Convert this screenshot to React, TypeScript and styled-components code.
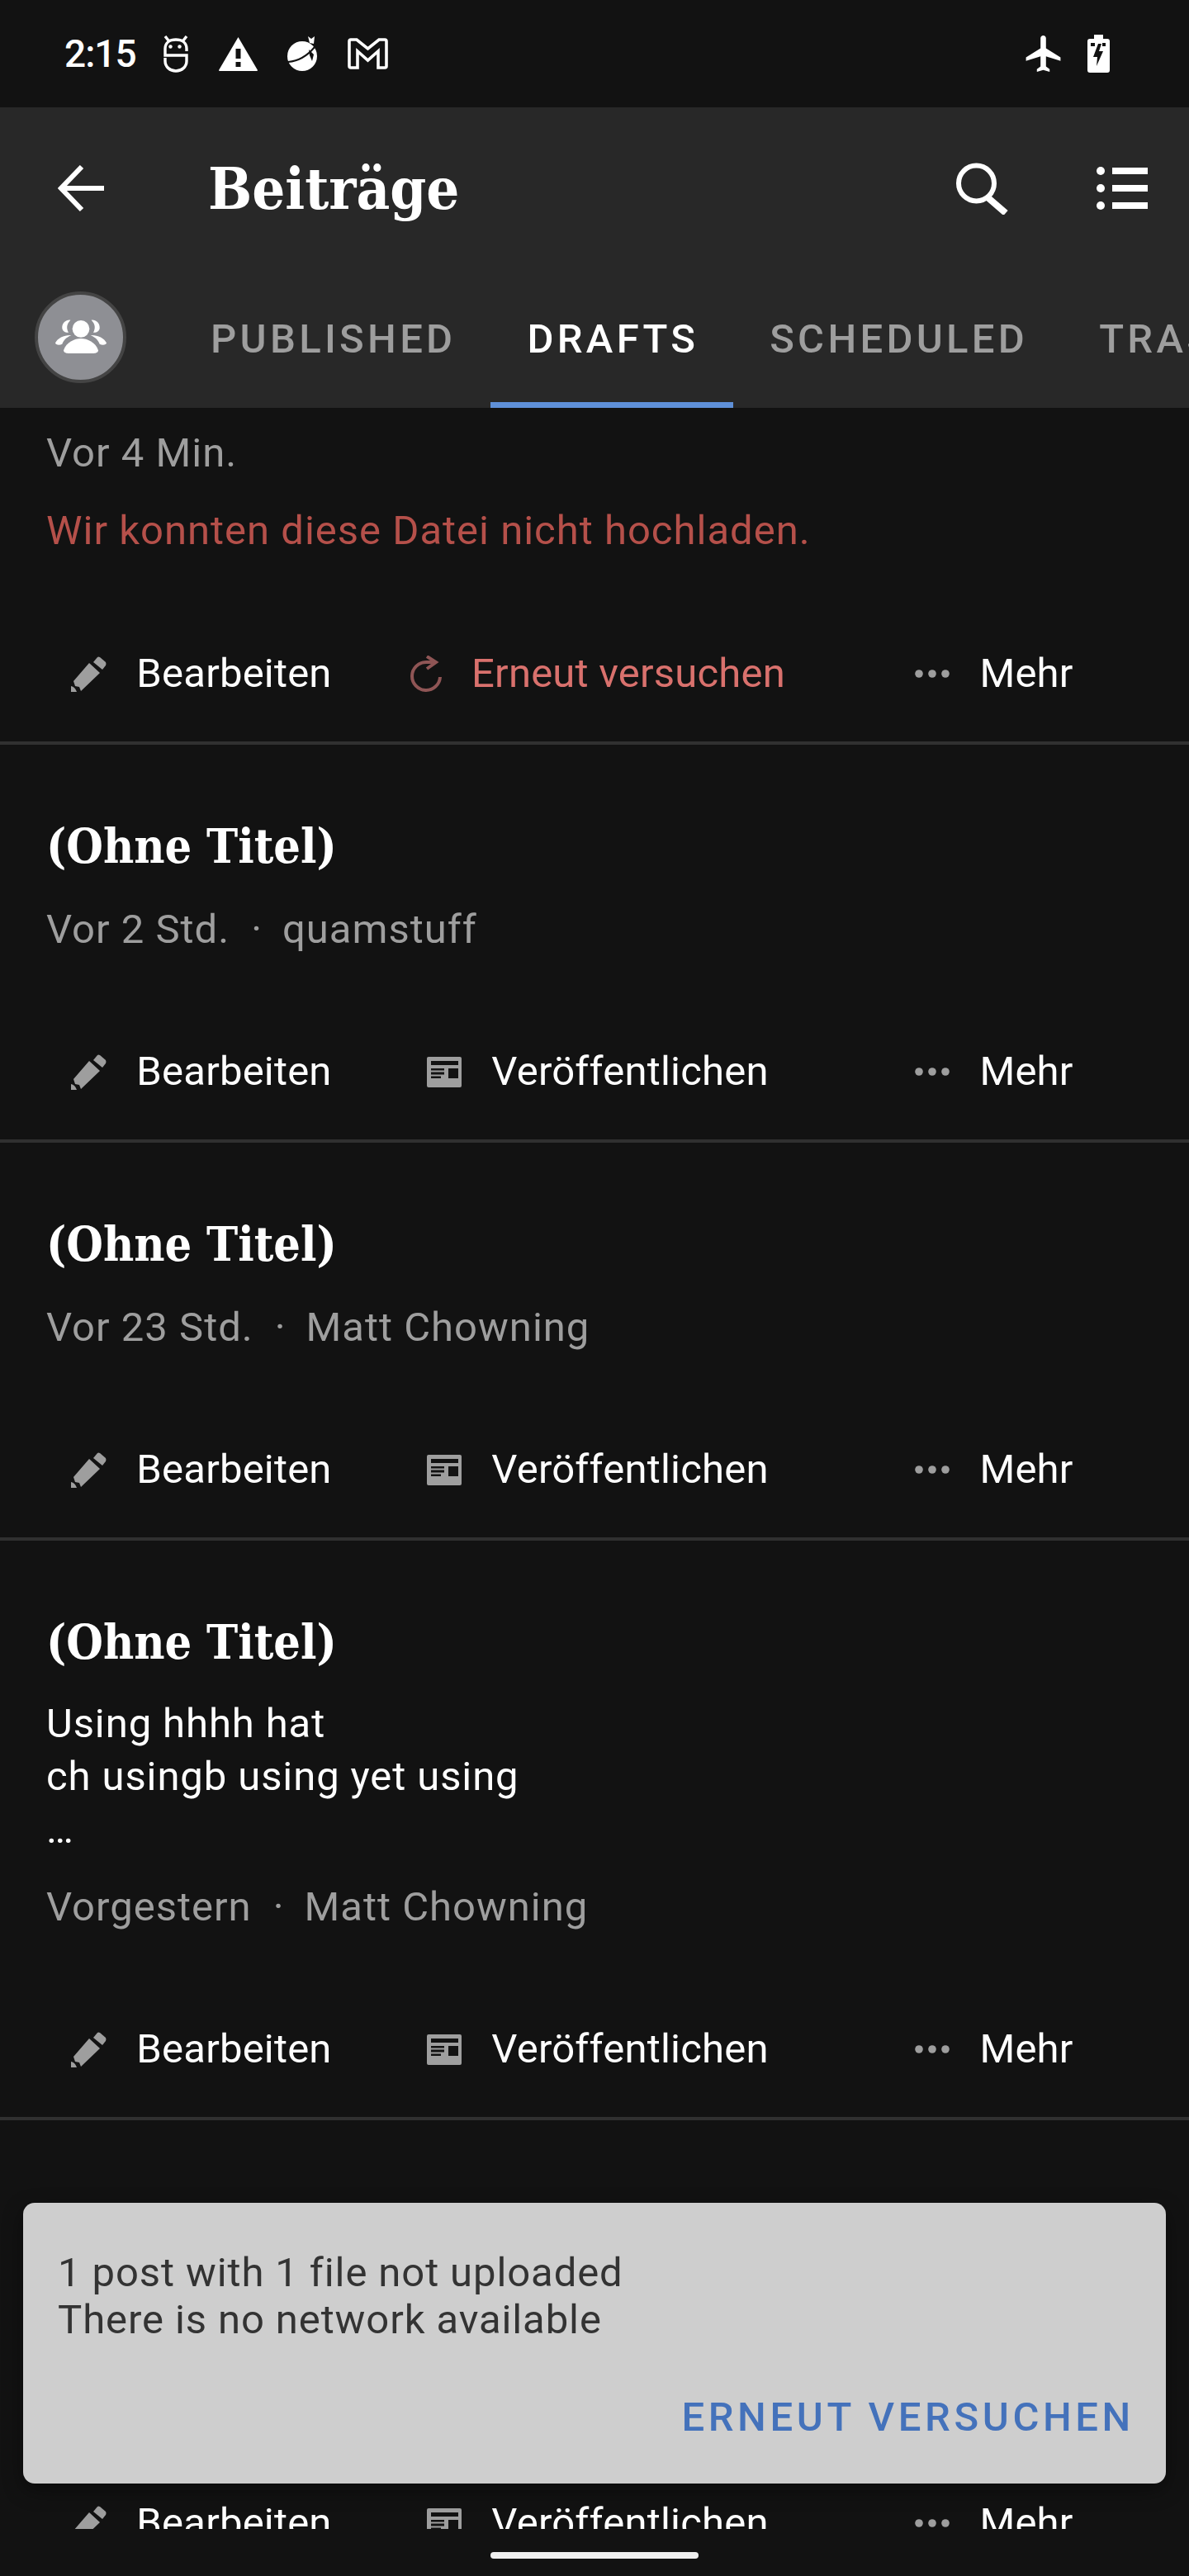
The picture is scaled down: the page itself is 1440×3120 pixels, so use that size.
import styled, { createGlobalStyle } from 'styled-components';

const GRAY = '#9e9e9e';
const BG = '#121212';

const GlobalStyle = createGlobalStyle`
  html, body {
    margin: 0;
    padding: 0;
    background: ${BG};
  }
  * {
    box-sizing: border-box;
  }
`;

const Screen = styled.div`
  position: relative;
  display: flex;
  flex-direction: column;
  width: 1440px;
  height: 3120px;
  overflow: hidden;
  background: ${BG};
  color: #fff;
  font-family: Roboto, "Liberation Sans", sans-serif;
  font-size: 49px;
  line-height: 64px;
`;

/* status bar */
const StatusBar = styled.div`
  display: flex;
  align-items: center;
  flex: none;
  height: 130px;
  padding: 0 96px 0 78px;
`;

const Clock = styled.span`
  width: 119px;
  font-size: 46px;
  letter-spacing: -1px;
  font-weight: 500;
`;

const StatusIcons = styled.div`
  display: flex;
  align-items: center;
  gap: ${(p: { $gap: number }) => p.$gap}px;
`;

const Spacer = styled.div`
  flex: 1;
`;

/* app bar */
const AppBar = styled.header`
  flex: none;
  background: #282828;
`;

const TopRow = styled.div`
  display: flex;
  align-items: center;
  height: 192px;
  padding: 4px 50px 0 70px;
`;

const PageTitle = styled.h1`
  margin: 0 0 0 126px;
  padding-top: 2px;
  flex: 1;
  font-family: "DejaVu Serif", "Liberation Serif", serif;
  font-stretch: condensed;
  font-weight: 700;
  font-size: 70px;
  line-height: 80px;
`;

const TopActions = styled.div`
  display: flex;
  align-items: center;
  gap: 106px;
`;

const TabRow = styled.div`
  display: flex;
  align-items: center;
  height: 172px;
  padding-left: 42px;
  overflow: hidden;
`;

const Avatar = styled.div`
  display: flex;
  align-items: center;
  justify-content: center;
  flex: none;
  width: 111px;
  height: 111px;
  margin-right: 58px;
  border: 4px solid #444;
  border-radius: 50%;
  background: #8e8f94;
`;

const Tab = styled.div<{ $active?: boolean }>`
  display: flex;
  align-items: center;
  flex: none;
  height: 172px;
  padding: 12px 42px 0 44px;
  border-bottom: 7px solid ${(p) => (p.$active ? '#5f90d8' : 'transparent')};
  color: ${(p) => (p.$active ? '#fff' : GRAY)};
  font-weight: 500;
  letter-spacing: 4.3px;
`;

/* list */
const List = styled.main`
  flex: none;
  height: 2569px;
  overflow: hidden;
`;

const Post = styled.article`
  padding: 0 56px;
  border-bottom: 4px solid #303030;
  &:last-child {
    border-bottom: 0;
  }
`;

const ClippedPost = styled(Post)`
  padding-top: 23px;
`;

/* only its action row shows, the rest of this post is behind the snackbar */
const CoveredPost = styled(Post)`
  padding-top: 348px;
`;

const PostTitle = styled.h2`
  margin: 0;
  padding-top: 88px;
  font-family: "DejaVu Serif", "Liberation Serif", serif;
  font-stretch: condensed;
  font-weight: 700;
  font-size: 57px;
  line-height: 70px;
`;

const Excerpt = styled.p`
  margin: 32px 0 0;
  white-space: pre-line;
  letter-spacing: 0.9px;
`;

const Meta = styled.div<{ $spaced?: boolean }>`
  display: flex;
  margin-top: ${(p) => (p.$spaced ? 30 : 34)}px;
  color: ${GRAY};
  letter-spacing: 1px;
`;

const ClippedMeta = styled(Meta)`
  margin-top: 0;
`;

const MetaDot = styled.span`
  padding: 0 24px 0 26px;
`;

const ErrorText = styled.div`
  margin-top: 30px;
  padding-bottom: 1px;
  color: #b5504a;
  letter-spacing: 1px;
`;

const Actions = styled.div`
  display: grid;
  grid-template-columns: repeat(3, 1fr);
  margin: 108px -60px 0 -52px;
  padding-bottom: 50px;
  letter-spacing: 0.2px;
`;

const ActionButton = styled.div<{ $danger?: boolean }>`
  display: flex;
  align-items: center;
  justify-content: center;
  gap: 36px;
  height: 64px;
  color: ${(p) => (p.$danger ? '#d9716d' : '#fff')};
`;

/* snackbar */
const Snackbar = styled.aside`
  position: absolute;
  left: 28px;
  top: 2668px;
  width: 1384px;
  height: 340px;
  padding: 56px 38px 0 42px;
  border-radius: 14px;
  background: #cecece;
  color: #333;
  box-shadow: 0 8px 24px rgba(0, 0, 0, 0.4);
`;

const SnackText = styled.div`
  line-height: 57px;
  letter-spacing: 0.9px;
`;

const SnackAction = styled.div`
  margin-top: 58px;
  text-align: right;
  color: #4472bb;
  font-weight: 500;
  letter-spacing: 4.6px;
`;

/* gesture pill */
const NavArea = styled.div`
  display: flex;
  justify-content: center;
  flex: none;
  padding-top: 28px;
`;

const HomePill = styled.div`
  width: 252px;
  height: 8px;
  border-radius: 4px;
  background: #eee;
`;

/* icons */
const BearIcon = () => (
  <svg width="32" height="45" viewBox="0 0 32 45" fill="none" stroke="#fff" strokeWidth="3.4">
    <path d="M29 19V16C29 8 23 5 16 5C9 5 3 8 3 16V24H29V31C29 38 23 43 16 43C9 43 3 38 3 31V27" />
    <path d="M3 1L7 6M29 1L25 6" />
    <circle cx="9.5" cy="13.5" r="2.2" fill="#fff" stroke="none" />
    <circle cx="20.5" cy="13.5" r="2.2" fill="#fff" stroke="none" />
  </svg>
);

const WarningIcon = () => (
  <svg width="47" height="41" viewBox="0 0 47 41">
    <path
      fill="#fff"
      fillRule="evenodd"
      d="M23.5 0L47 40Q47 41 46 41H1Q0 41 0 40ZM20.5 14V26H26.5V14ZM20.5 30V36H26.5V30Z"
    />
  </svg>
);

const BallIcon = () => (
  <svg width="37" height="42" viewBox="0 0 37 42">
    <circle cx="18" cy="24" r="18" fill="#fff" />
    <path d="M1 31C12 30 24 24 33 13" fill="none" stroke={BG} strokeWidth="2" />
    <path d="M26 16L32 22L30 30L27 23Z" fill={BG} />
    <path d="M25 0L29 3L33 0L32 9L27 8Z" fill="#fff" />
  </svg>
);

const GmailIcon = () => (
  <svg width="49" height="38" viewBox="0 0 49 38" fill="none" stroke="#fff" strokeWidth="3.6">
    <path d="M2 4Q2 2 4 2H11L24.5 13L38 2H45Q47 2 47 4V34Q47 36 45 36H37V16L24.5 27L12 16V36H4Q2 36 2 34Z" />
  </svg>
);

const PlaneIcon = () => (
  <svg width="43" height="44" viewBox="2 2 19 20">
    <path
      fill="#fff"
      d="M21 16v-2l-8-5V3.5c0-.83-.67-1.5-1.5-1.5S10 2.67 10 3.5V9l-8 5v2l8-2.5V19l-2 1.5V22l3.5-1 3.5 1v-1.5L13 19v-5.5l8 2.5z"
    />
  </svg>
);

const BatteryIcon = () => (
  <svg width="27" height="46" viewBox="0 0 27 46">
    <path
      fill="#fff"
      fillRule="evenodd"
      d="M8 0H19V5H24Q27 5 27 8V43Q27 46 24 46H3Q0 46 0 43V8Q0 5 3 5H8ZM4 10V14H9V10ZM18 10V14H22V10ZM13 11L7 27H12L11 38L19 20H14L17 11Z"
    />
  </svg>
);

const BackIcon = () => (
  <svg width="56" height="56" viewBox="0 0 56 56" fill="none" stroke="#fff" strokeWidth="6">
    <path d="M56 28H4M29 2L4 28L29 54" />
  </svg>
);

const SearchIcon = () => (
  <svg width="64" height="63" viewBox="0 0 64 63" fill="none" stroke="#fff">
    <circle cx="24.5" cy="25" r="21.5" strokeWidth="6" />
    <path d="M38 42L60 61" strokeWidth="8" />
  </svg>
);

const ListIcon = () => (
  <svg width="62" height="52" viewBox="0 0 62 52" fill="#fff">
    <circle cx="5" cy="5" r="5" />
    <circle cx="5" cy="26" r="5" />
    <circle cx="5" cy="47" r="5" />
    <rect x="19" y="1" width="43" height="8" />
    <rect x="19" y="22" width="43" height="8" />
    <rect x="19" y="43" width="43" height="8" />
  </svg>
);

const GroupIcon = () => (
  <svg width="62" height="44" viewBox="110 140 186 132" fill="#fff">
    <circle cx="203" cy="177" r="31" />
    <path d="M140 255C150 225 180 212 203 212C226 212 256 225 266 255C266 262 258 266 250 266H156C148 266 140 262 140 255Z" />
    <path d="M165 145C145 143 133 160 135 175C137 187 150 192 158 190C150 175 150 160 165 145Z" />
    <path d="M241 145C261 143 273 160 271 175C269 187 256 192 248 190C256 175 256 160 241 145Z" />
    <path d="M110 228C118 210 145 198 168 200C150 208 140 218 135 232C125 238 110 235 110 228Z" />
    <path d="M296 228C288 210 261 198 238 200C256 208 266 218 271 232C281 238 296 235 296 228Z" />
  </svg>
);

const PencilIcon = () => (
  <svg width="43" height="43" viewBox="0 0 43 43" fill={GRAY}>
    <path d="M27 7L32 1Q33 0 35 1L42 7Q43 9 42 11L38 16Z" />
    <path d="M22 8L35 20L12 42L10 37L5 36L3 30Z" />
    <path d="M0 36Q5 37 7 43H0Z" />
  </svg>
);

const PublishIcon = () => (
  <svg width="42" height="37" viewBox="0 0 42 37">
    <rect width="42" height="37" rx="2" fill={GRAY} />
    <g fill={BG}>
      <rect x="5" y="5" width="33" height="5" />
      <rect x="5" y="14" width="16" height="2.5" />
      <rect x="5" y="18.5" width="16" height="3" />
      <rect x="5" y="23.5" width="12" height="2.5" />
      <rect x="26" y="14" width="12" height="12" />
    </g>
  </svg>
);

const RetryIcon = () => (
  <svg width="38" height="45" viewBox="0 0 38 45" fill="none" stroke="#8f5555" strokeWidth="4">
    <path d="M30 8H19A17 17 0 1 0 36 26" />
    <path d="M20 1L31 8L20 16" />
  </svg>
);

const DotsIcon = () => (
  <svg width="42" height="10" viewBox="0 0 42 10" fill={GRAY}>
    <circle cx="5" cy="5" r="4.8" />
    <circle cx="21" cy="5" r="4.8" />
    <circle cx="37" cy="5" r="4.8" />
  </svg>
);

const PostActions = ({ retry }: { retry?: boolean }) => (
  <Actions>
    <ActionButton>
      <PencilIcon />
      Bearbeiten
    </ActionButton>
    {retry ? (
      <ActionButton $danger>
        <RetryIcon />
        Erneut versuchen
      </ActionButton>
    ) : (
      <ActionButton>
        <PublishIcon />
        Veröffentlichen
      </ActionButton>
    )}
    <ActionButton>
      <DotsIcon />
      Mehr
    </ActionButton>
  </Actions>
);

const drafts = [
  { time: 'Vor 2 Std.', author: 'quamstuff' },
  { time: 'Vor 23 Std.', author: 'Matt Chowning' },
  { time: 'Vorgestern', author: 'Matt Chowning', excerpt: 'Using hhhh hat\nch usingb using yet using\n…' },
];

const App = () => (
  <>
    <GlobalStyle />
    <Screen>
      <StatusBar>
        <Clock>2:15</Clock>
        <StatusIcons $gap={36}>
          <BearIcon />
          <WarningIcon />
          <BallIcon />
          <GmailIcon />
        </StatusIcons>
        <Spacer />
        <StatusIcons $gap={32}>
          <PlaneIcon />
          <BatteryIcon />
        </StatusIcons>
      </StatusBar>
      <AppBar>
        <TopRow>
          <BackIcon />
          <PageTitle>Beiträge</PageTitle>
          <TopActions>
            <SearchIcon />
            <ListIcon />
          </TopActions>
        </TopRow>
        <TabRow>
          <Avatar>
            <GroupIcon />
          </Avatar>
          <Tab>PUBLISHED</Tab>
          <Tab $active>DRAFTS</Tab>
          <Tab>SCHEDULED</Tab>
          <Tab>TRASHED</Tab>
        </TabRow>
      </AppBar>
      <List>
        <ClippedPost>
          <ClippedMeta>Vor 4 Min.</ClippedMeta>
          <ErrorText>Wir konnten diese Datei nicht hochladen.</ErrorText>
          <PostActions retry />
        </ClippedPost>
        {drafts.map((d, i) => (
          <Post key={i}>
            <PostTitle>(Ohne Titel)</PostTitle>
            {d.excerpt && <Excerpt>{d.excerpt}</Excerpt>}
            <Meta $spaced={!!d.excerpt}>
              {d.time}
              <MetaDot>·</MetaDot>
              {d.author}
            </Meta>
            <PostActions />
          </Post>
        ))}
        <CoveredPost>
          <PostActions />
        </CoveredPost>
      </List>
      <NavArea>
        <HomePill />
      </NavArea>
      <Snackbar>
        <SnackText>
          1 post with 1 file not uploaded
          <br />
          There is no network available
        </SnackText>
        <SnackAction>ERNEUT VERSUCHEN</SnackAction>
      </Snackbar>
    </Screen>
  </>
);

export default App;
